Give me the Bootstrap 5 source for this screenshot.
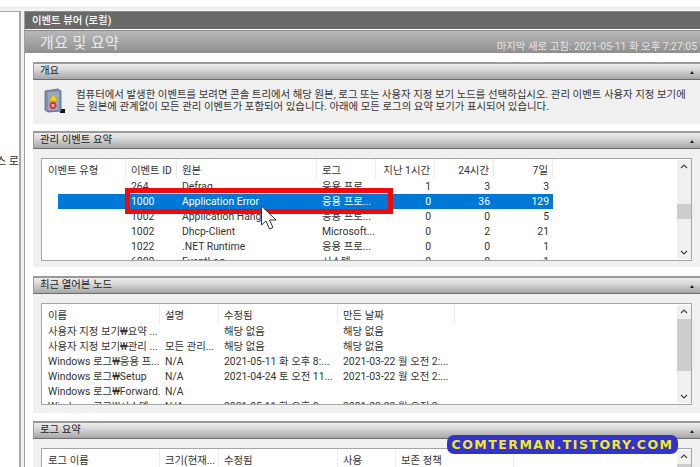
<!DOCTYPE html>
<html lang="ko">
<head>
<meta charset="utf-8">
<title>이벤트 뷰어</title>
<link href="https://cdn.jsdelivr.net/npm/bootstrap@5.3.0/dist/css/bootstrap.min.css" rel="stylesheet">
<style>
html,body{width:700px;height:467px;overflow:hidden;margin:0;background:#fff}
body{font-family:Roboto,"Noto Sans CJK KR","Liberation Sans",sans-serif;font-size:10.4px;color:#333;position:relative}
.topstrip{height:11px;background:linear-gradient(#fff 0,#fff 6px,#ececec 7px,#f2f2f2 10px)}
.shell{height:456px}
.treepane{width:21px;flex:none;border-top:1px solid #a8a8a8;border-right:2px solid #a8a8a8;overflow:hidden;white-space:nowrap;background:#fff}
.treetext{margin-top:143px;margin-left:-4px;font-size:11px;line-height:14px}
.gutter{width:3px;flex:none;background:#f0f0f0}
.mainpane{flex:1 1 auto;min-width:0;border-left:1px solid #a0a0a0;overflow:hidden}
.evtitle{height:18px;background:#696969;color:#fff;font-weight:500;font-size:10.4px;line-height:17px;padding-left:7px;border-top:1px solid #8c8c8c}
.evband{height:23px;margin-top:1px;background:linear-gradient(#b8b8b8,#8f8f8f);padding:0 3px 0 15px;color:#e9e9e9;border-top:1px solid #888}
.evband h1{font-size:15px;font-weight:400;margin:0;letter-spacing:.4px;line-height:24px}
.evstamp{font-size:10.4px;line-height:12px;align-self:flex-end;color:#e4e4e4;margin-bottom:0}
.bodyarea{padding-left:8px;padding-top:9px}
.secbar{height:18px;background:linear-gradient(#ececec,#dadada 35%,#a6a6a6);border-top:2px solid #9a9a9a;border-bottom:1px solid #6e6e6e;border-left:1px solid #9a9a9a;line-height:14px;padding:0 6px 0 6px;color:#222;font-size:10.4px}
.tri{width:0;height:0;border-left:2.5px solid transparent;border-right:2.5px solid transparent;border-bottom:3px solid #222;margin-top:7px}
.secbody{background:#f0f0f0;padding:9px 8px 6px 8px;margin-bottom:9px}
.nodesbody{padding-bottom:8px;margin-bottom:8px}
.ovbody{height:44px;padding:8px 6px 0 11px;line-height:12px;letter-spacing:.02px;color:#333;margin-bottom:7px;background:#f0f0f0}
.ovtext{margin:1px 0 0 10px;white-space:nowrap}
.bookicon{flex:none}
.lvbox{border:1px solid #a6a6a6;background:#fff;overflow:hidden}
.lv1{height:103px}.lv2{height:102px}.lv3{height:40px}
.lvmain{flex:1 1 auto;min-width:0;overflow:hidden}
.lvt{table-layout:fixed;border-collapse:separate;border-spacing:0;margin:0;--bs-table-bg:transparent;color:#333;font-size:10.4px}
.lvwide1{width:511px}.lvwide2{width:413px}.lvwide3{width:472px}
.lvt th,.lvt td{padding:0 5px;white-space:nowrap;overflow:hidden;font-weight:400;border:0;color:#333;background:transparent;box-shadow:none}
.lvt th{height:20px;line-height:16px;padding-top:4px;border-right:1px solid #ececec}
.lvt td{height:15px;line-height:15px}
.lvt th:first-child,.lvt td:first-child{padding-left:6px;padding-right:0}
.lvt .num{text-align:right;padding-right:4px}
.lvt tr.picked td{background:#0078d7;color:#fff}
.lvt tr.picked td:first-child{background:linear-gradient(90deg,#fff 16px,#0078d7 16px)}
.scrollrail{width:14px;flex:none;background:#f0f0f0;position:relative;margin:1px 0}
.chev{display:block;margin:4px auto 0}
.chevdown{position:absolute;left:3px;bottom:4px;margin:0}
.thumb{position:absolute;left:0;right:0;background:#cdcdcd}
.th1{top:44px;height:15px}
.th2{top:14px;height:52px}
.th3{top:14px;height:30px}
.redmark{position:absolute;left:125px;top:188px;width:268px;height:26px;border:5px solid #f00a0a}
.pointer{position:absolute;left:260px;top:205px}
.stampmark{position:absolute;left:447px;top:435px;width:231px;height:19px;background:#3232cc;border-radius:7px;color:#f2ea22;font-family:"DejaVu Sans",sans-serif;font-weight:700;font-size:12.5px;line-height:19px;letter-spacing:1.5px;text-align:center;white-space:nowrap}
.c1a{width:84px}.c1b{width:51px}.c1c{width:140px}.c1d{width:59px}.c1e{width:59px}.c1f{width:59px}.c1g{width:59px}
.c2a{width:118px}.c2b{width:59px}.c2c{width:119px}.c2d{width:117px}
.c3a{width:118px}.c3b{width:59px}.c3c{width:119px}.c3d{width:58px}.c3e{width:118px}
</style>
</head>
<body>
<div class="topstrip"></div>
<div class="shell d-flex">
  <aside class="treepane"><div class="treetext">스 로.</div></aside>
  <div class="gutter"></div>
  <main class="mainpane">
    <div class="evtitle">이벤트 뷰어 (로컬)</div>
    <div class="evband d-flex justify-content-between">
      <h1>개요 및 요약</h1>
      <div class="evstamp">마지막 새로 고침: 2021-05-11 화 오후 7:27:05</div>
    </div>
    <div class="bodyarea">
      <div class="secbar d-flex justify-content-between"><span>개요</span><i class="tri"></i></div>
      <div class="ovbody d-flex">
        <svg class="bookicon" width="22" height="26" viewBox="0 0 22 26" aria-hidden="true">
          <path d="M16 21h5v4h-5z" fill="#111"/>
          <path d="M1 3 14 1l3 2v20l-13 1-3-2z" fill="#7f90b0" stroke="#56657f" stroke-width=".8"/>
          <path d="M4 4h11v18H4z" fill="#98a8c4"/>
          <path d="M9.5 5.5 14 13H5z" fill="#f2d21e" stroke="#a88d10" stroke-width=".5"/>
          <circle cx="9" cy="17.5" r="3.4" fill="#d92f35"/>
          <path d="m7.6 16 2.8 3m0-3-2.8 3" stroke="#fff" stroke-width=".9"/>
        </svg>
        <p class="ovtext">컴퓨터에서 발생한 이벤트를 보려면 콘솔 트리에서 해당 원본, 로그 또는 사용자 지정 보기 노드를 선택하십시오. 관리 이벤트 사용자 지정 보기에<br>는 원본에 관계없이 모든 관리 이벤트가 포함되어 있습니다. 아래에 모든 로그의 요약 보기가 표시되어 있습니다.</p>
      </div>
      <div class="secbar d-flex justify-content-between"><span>관리 이벤트 요약</span><i class="tri"></i></div>
      <div class="secbody">
        <div class="lvbox lv1 d-flex">
          <div class="lvmain">
            <table class="table lvt lvwide1">
              <colgroup><col class="c1a"><col class="c1b"><col class="c1c"><col class="c1d"><col class="c1e"><col class="c1f"><col class="c1g"></colgroup>
              <thead><tr><th>이벤트 유형</th><th>이벤트 ID</th><th>원본</th><th>로그</th><th class="num">지난 1시간</th><th class="num">24시간</th><th class="num">7일</th></tr></thead>
              <tbody>
                <tr><td></td><td>264</td><td>Defrag</td><td>응용 프로</td><td class="num">1</td><td class="num">3</td><td class="num">3</td></tr>
                <tr class="picked"><td></td><td>1000</td><td>Application Error</td><td>응용 프로...</td><td class="num">0</td><td class="num">36</td><td class="num">129</td></tr>
                <tr><td></td><td>1002</td><td>Application Hang</td><td>응용 프로...</td><td class="num">0</td><td class="num">0</td><td class="num">5</td></tr>
                <tr><td></td><td>1002</td><td>Dhcp-Client</td><td>Microsoft...</td><td class="num">0</td><td class="num">2</td><td class="num">21</td></tr>
                <tr><td></td><td>1022</td><td>.NET Runtime</td><td>응용 프로...</td><td class="num">0</td><td class="num">0</td><td class="num">1</td></tr>
                <tr><td></td><td>6000</td><td>EventLog</td><td>시스템</td><td class="num">0</td><td class="num">0</td><td class="num">1</td></tr>
              </tbody>
            </table>
          </div>
          <div class="scrollrail">
            <svg class="chev" width="8" height="5" viewBox="0 0 8 5" aria-hidden="true"><path d="m1 4 3-3 3 3" fill="none" stroke="#444" stroke-width="1.2"/></svg>
            <div class="thumb th1"></div>
            <svg class="chev chevdown" width="8" height="5" viewBox="0 0 8 5" aria-hidden="true"><path d="m1 1 3 3 3-3" fill="none" stroke="#444" stroke-width="1.2"/></svg>
          </div>
        </div>
      </div>
      <div class="secbar d-flex justify-content-between"><span>최근 열어본 노드</span><i class="tri"></i></div>
      <div class="secbody nodesbody">
        <div class="lvbox lv2 d-flex">
          <div class="lvmain">
            <table class="table lvt lvwide2">
              <colgroup><col class="c2a"><col class="c2b"><col class="c2c"><col class="c2d"></colgroup>
              <thead><tr><th>이름</th><th>설명</th><th>수정됨</th><th>만든 날짜</th></tr></thead>
              <tbody>
                <tr><td>사용자 지정 보기₩요약 ...</td><td></td><td>해당 없음</td><td>해당 없음</td></tr>
                <tr><td>사용자 지정 보기₩관리 ...</td><td>모든 관리...</td><td>해당 없음</td><td>해당 없음</td></tr>
                <tr><td>Windows 로그₩응용 프...</td><td>N/A</td><td>2021-05-11 화 오후 8:...</td><td>2021-03-22 월 오전 2:...</td></tr>
                <tr><td>Windows 로그₩Setup</td><td>N/A</td><td>2021-04-24 토 오전 11...</td><td>2021-03-22 월 오전 2:...</td></tr>
                <tr><td>Windows 로그₩Forward...</td><td>N/A</td><td></td><td></td></tr>
                <tr><td>Windows 로그₩시스템</td><td>N/A</td><td>2021-05-11 화 오후 8:...</td><td>2021-03-22 월 오전 2:...</td></tr>
              </tbody>
            </table>
          </div>
          <div class="scrollrail">
            <svg class="chev" width="8" height="5" viewBox="0 0 8 5" aria-hidden="true"><path d="m1 4 3-3 3 3" fill="none" stroke="#444" stroke-width="1.2"/></svg>
            <div class="thumb th2"></div>
            <svg class="chev chevdown" width="8" height="5" viewBox="0 0 8 5" aria-hidden="true"><path d="m1 1 3 3 3-3" fill="none" stroke="#444" stroke-width="1.2"/></svg>
          </div>
        </div>
      </div>
      <div class="secbar d-flex justify-content-between"><span>로그 요약</span><i class="tri"></i></div>
      <div class="secbody">
        <div class="lvbox lv3 d-flex">
          <div class="lvmain">
            <table class="table lvt lvwide3">
              <colgroup><col class="c3a"><col class="c3b"><col class="c3c"><col class="c3d"><col class="c3e"></colgroup>
              <thead><tr><th>로그 이름</th><th>크기(현재...</th><th>수정됨</th><th>사용</th><th>보존 정책</th></tr></thead>
            </table>
          </div>
          <div class="scrollrail">
            <svg class="chev" width="8" height="5" viewBox="0 0 8 5" aria-hidden="true"><path d="m1 4 3-3 3 3" fill="none" stroke="#444" stroke-width="1.2"/></svg>
            <div class="thumb th3"></div>
          </div>
        </div>
      </div>
    </div>
  </main>
</div>
<div class="redmark"></div>
<svg class="pointer" width="19" height="26" viewBox="0 0 19 26" aria-hidden="true"><path d="M1.5 1v19l4.5-4 3.5 8 3.5-1.5-3.5-7.5H16z" fill="#fff" stroke="#333" stroke-width="1" stroke-linejoin="round"/></svg>
<div class="stampmark">COMTERMAN.TISTORY.COM</div>
<script src="https://cdn.jsdelivr.net/npm/bootstrap@5.3.0/dist/js/bootstrap.bundle.min.js"></script>
</body>
</html>
